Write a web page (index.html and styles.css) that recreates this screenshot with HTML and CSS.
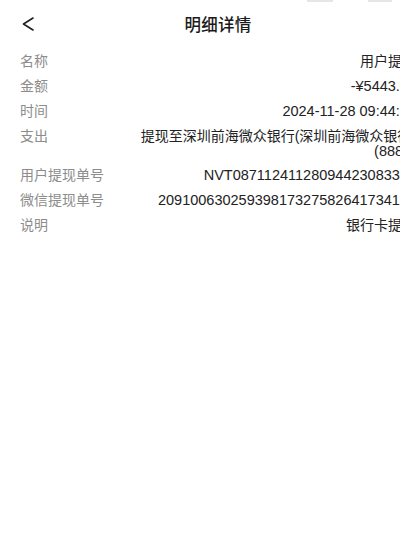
FILE: index.html
```html
<!DOCTYPE html>
<html lang="zh-CN">
<head>
<meta charset="utf-8">
<title>明细详情</title>
<link rel="stylesheet" href="styles.css">
</head>
<body>
<div class="page">
  <div class="status">
    <span class="sb sb-a"></span>
    <span class="sb sb-b"></span>
  </div>
  <header class="nav">
    <div class="back">
      <svg width="14" height="16" viewBox="0 0 14 16" aria-hidden="true">
        <path d="M12 2 L2.5 8 L12 14" fill="none" stroke="#1f1f1f" stroke-width="1.6" stroke-linecap="round" stroke-linejoin="round"/>
      </svg>
    </div>
    <h1 class="title">明细详情</h1>
    <div class="spacer"></div>
  </header>
  <main class="list">
    <div class="row"><span class="label">名称</span><span class="value">用户提现</span></div>
    <div class="row"><span class="label">金额</span><span class="value num">-¥5443.00</span></div>
    <div class="row"><span class="label">时间</span><span class="value num">2024-11-28 09:44:36</span></div>
    <div class="row row-multi"><span class="label">支出</span><span class="value multi">提现至深圳前海微众银行(深圳前海微众银行)<br><span class="num">(8888)</span></span></div>
    <div class="row"><span class="label">用户提现单号</span><span class="value num">NVT08711241128094423083306</span></div>
    <div class="row"><span class="label">微信提现单号</span><span class="value num">20910063025939817327582641734158</span></div>
    <div class="row"><span class="label">说明</span><span class="value">银行卡提现</span></div>
  </main>
</div>
</body>
</html>
```

FILE: styles.css
```css
html, body {
  margin: 0;
  padding: 0;
  overflow: hidden;
  background: #ffffff;
}
body {
  width: 400px;
  height: 539px;
  font-family: "Liberation Sans", "Noto Sans CJK SC", sans-serif;
  color: #222222;
}
.page {
  width: 436px;
  box-sizing: border-box;
  padding: 0 20px;
}
.status {
  height: 4px;
  display: flex;
  align-items: flex-start;
  padding-left: 287px;
  gap: 35px;
}
.sb {
  display: block;
  height: 2px;
  background: #e6e6e6;
}
.sb-a { width: 26px; }
.sb-b { width: 24px; }
.nav {
  height: 40px;
  display: grid;
  grid-template-columns: 1fr auto 1fr;
  align-items: center;
}
.back {
  display: flex;
  align-items: center;
  padding-left: 1px;
}
.back svg { display: block; }
.title {
  margin: 0;
  font-size: 16.5px;
  font-weight: 500;
  color: #1a1a1a;
  letter-spacing: 0.3px;
}
.list {
  display: flex;
  flex-direction: column;
  gap: 11px;
  padding-top: 10px;
}
.row {
  display: flex;
  justify-content: space-between;
  align-items: flex-start;
  line-height: 14px;
}
.row-multi {
  margin-bottom: -2px;
}
.label {
  flex: none;
  font-size: 14px;
  color: #8c8c8c;
}
.value {
  flex: none;
  white-space: nowrap;
  text-align: right;
  font-size: 14px;
  color: #222222;
}
.multi {
  line-height: 15px;
  margin-top: -0.5px;
}
.num {
  font-size: 14.5px;
}
```
